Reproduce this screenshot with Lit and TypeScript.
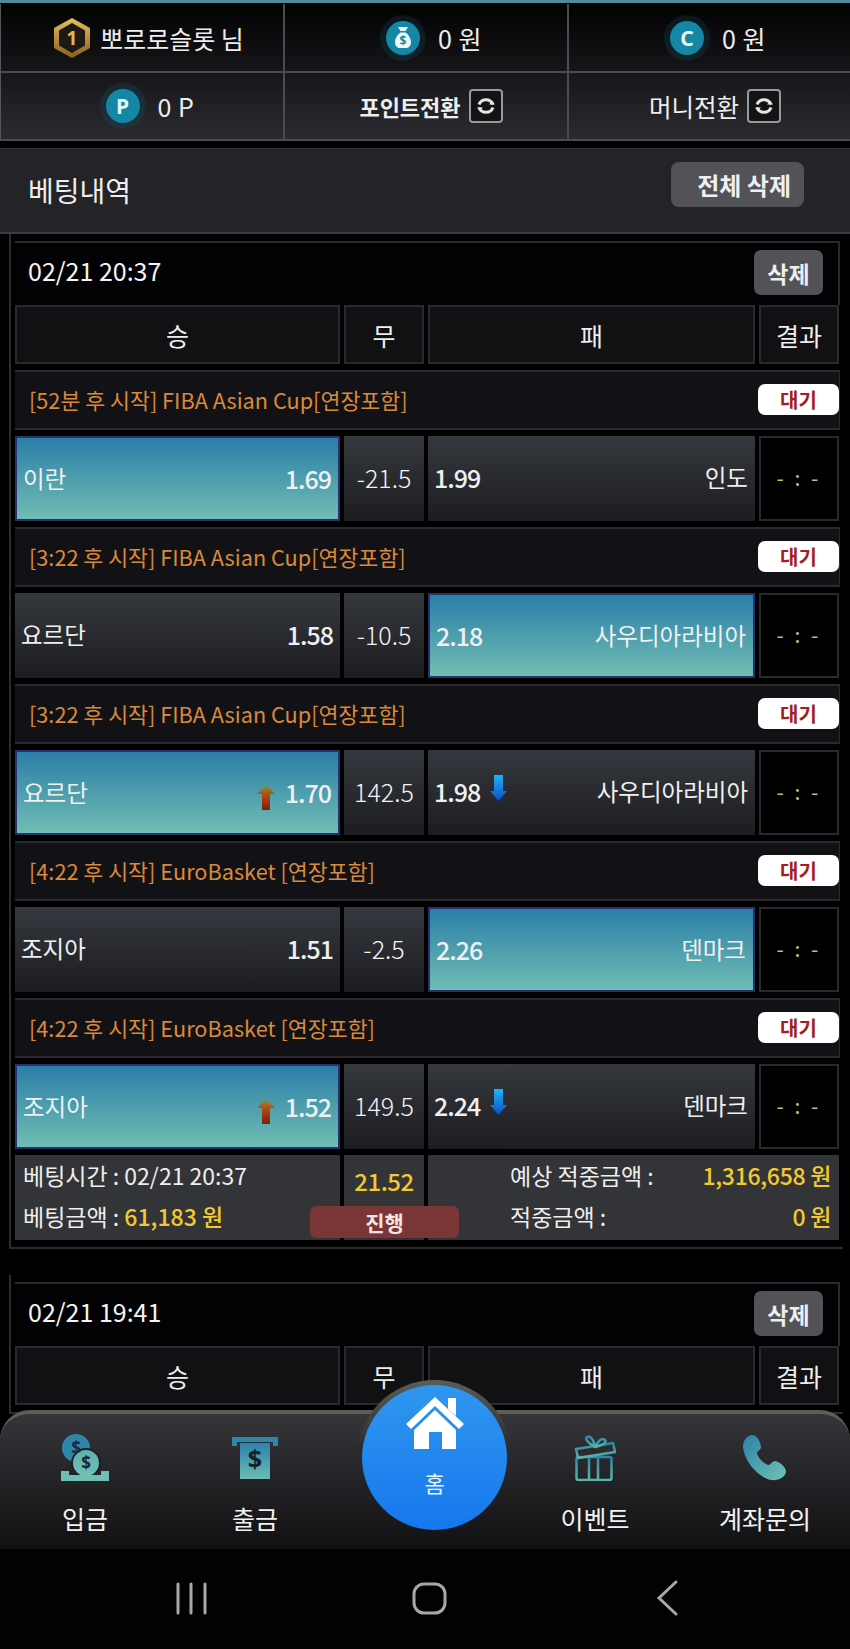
import { LitElement, html, css } from "lit";
import { customElement } from "lit/decorators.js";

type Side = { name: string; odds: string; sel?: boolean; arrow?: "up" | "down" };
type Bet = { league: string; left: Side; mid: string; right: Side };

const bets: Bet[] = [
  { league: "[52분 후 시작] FIBA Asian Cup[연장포함]", left: { name: "이란", odds: "1.69", sel: true }, mid: "-21.5", right: { name: "인도", odds: "1.99" } },
  { league: "[3:22 후 시작] FIBA Asian Cup[연장포함]", left: { name: "요르단", odds: "1.58" }, mid: "-10.5", right: { name: "사우디아라비아", odds: "2.18", sel: true } },
  { league: "[3:22 후 시작] FIBA Asian Cup[연장포함]", left: { name: "요르단", odds: "1.70", sel: true, arrow: "up" }, mid: "142.5", right: { name: "사우디아라비아", odds: "1.98", arrow: "down" } },
  { league: "[4:22 후 시작] EuroBasket [연장포함]", left: { name: "조지아", odds: "1.51" }, mid: "-2.5", right: { name: "덴마크", odds: "2.26", sel: true } },
  { league: "[4:22 후 시작] EuroBasket [연장포함]", left: { name: "조지아", odds: "1.52", sel: true, arrow: "up" }, mid: "149.5", right: { name: "덴마크", odds: "2.24", arrow: "down" } },
];

const upArrow = html`<svg class="arrow up" width="18" height="25" viewBox="0 0 18 25"><defs><linearGradient id="au" x1="0" y1="0" x2="0" y2="1"><stop offset="0" stop-color="#7d9a3a"/><stop offset=".4" stop-color="#b8480f"/><stop offset="1" stop-color="#7a1f0c"/></linearGradient></defs><path d="M9 0 18 9H13V25H5V9H0Z" fill="url(#au)"/></svg>`;
const downArrow = html`<svg class="arrow down" width="17" height="26" viewBox="0 0 17 26"><defs><linearGradient id="ad" x1="0" y1="0" x2="0" y2="1"><stop offset="0" stop-color="#22b4f5"/><stop offset="1" stop-color="#0a4fc4"/></linearGradient></defs><path d="M4 0H13V16H17L8.500 26 0 16H4Z" fill="url(#ad)"/></svg>`;
const refresh = html`<span class="refresh"><svg width="22" height="22" viewBox="0 0 22 22" fill="none" stroke="#e4e4e4" stroke-width="3"><path d="M4 9.500A7.500 7.500 0 0 1 18 9.500"/><path d="M18 12.500A7.500 7.500 0 0 1 4 12.500"/><path d="M14 9.500H20L17 6Z" fill="#e4e4e4" stroke="none"/><path d="M2 12.500H8L5 16Z" fill="#e4e4e4" stroke="none"/></svg></span>`;

@customElement("app-root")
export class AppRoot extends LitElement {
  static styles = css`
    :host { display: block; position: relative; width: 850px; height: 1649px; overflow: hidden; background: #000; color: #f0f0f0;
      font-family: "Noto Sans CJK KR", "Noto Sans", sans-serif; }
    * { box-sizing: border-box; }
    .topline { height: 3px; background: #4d8a9b; }
    .wallet { margin-top: 1px; display: grid; grid-template-columns: 284px 284px 282px; grid-template-rows: 69px 66px;
      background: linear-gradient(#020203, #2a2a30); border-left: 1px solid #55555a; border-bottom: 2px solid #4c4c50; }
    .wc { display: flex; align-items: center; justify-content: center; gap: 7px; font-size: 25px; font-weight: 400; color: #eee; border-right: 2px solid #4c4c50; white-space: nowrap; }
    .wc:nth-child(3n) { border-right: 0; }
    .wc:nth-child(-n+3) { border-bottom: 2px solid #4c4c50; }
    .wc b { font-size: 22px; font-weight: 700; }
    .wc .plain { font-size: 24.500px; }
    .wc.user { gap: 10px; padding-left: 14px; }
    .wc.amt { gap: 18px; padding-left: 16px; letter-spacing: .5px; }
    .wc.conv { padding-left: 10px; }
    .coin { position: relative; width: 34px; height: 34px; border-radius: 50%; background: #1487a6; box-shadow: 0 0 0 6px rgba(20,120,150,.16);
      display: flex; align-items: center; justify-content: center; color: #e8f6f8; font: 700 21px "Noto Sans", sans-serif; letter-spacing: 0; }
    .refresh { display: inline-flex; align-items: center; justify-content: center; width: 34px; height: 34px; border: 2px solid #9a9a9a; border-radius: 4px; background: #131316; margin-left: 1px; }
    .title { margin-top: 7px; height: 86px; display: flex; justify-content: space-between; align-items: flex-start; padding: 13px 46px 0 28px;
      background: #242428; border-top: 1px solid #323236; border-bottom: 2px solid #3c3c40; }
    .title h1 { margin: 5px 0 0; font-size: 28px; font-weight: 400; line-height: 46px; color: #eee; }
    .allbtn { width: 133px; height: 45px; border-radius: 8px; background: #525257; color: #f0f0f0; font-size: 24px; font-weight: 700;
      display: flex; align-items: center; justify-content: flex-end; padding-right: 13px; }
    .section { margin-left: 9px; width: 834px; border-left: 2px solid #2c2c30; border-bottom: 2px solid #2c2c30; padding: 7px 3px 7px 4px; }
    .section + .section { margin-top: 26px; }
    .head { height: 64px; display: flex; align-items: flex-start; justify-content: space-between; padding: 7px 15px 0 13px;
      border-top: 2px solid #2a2a2e; border-right: 2px solid #2a2a2e; background: #020204; }
    .date { font-size: 25px; line-height: 40px; color: #f4f4f4; }
    .del { width: 69px; height: 45px; border-radius: 7px; background: #525257; font-size: 23px; font-weight: 700; color: #eee; display: flex; align-items: center; justify-content: center; }
    .row { display: grid; grid-template-columns: 325px 80px 327px 80px; gap: 4px; }
    .hc { height: 59px; border: 2px solid #2a2a2e; background: #111114; display: flex; align-items: center; justify-content: center; font-size: 25px; color: #eee; }
    .league { margin-top: 6px; height: 60px; display: flex; align-items: center; justify-content: space-between; padding: 0 0 2px 14px;
      background: #121216; border-top: 2px solid #2a2a2e; border-bottom: 2px solid #2a2a2e; border-right: 1px solid #2a2a2e; color: #d98a3a; font-size: 21.700px; }
    .pill { width: 81px; height: 31px; border-radius: 7px; background: #fff; color: #a51d1f; font-size: 20px; font-weight: 700; display: flex; align-items: center; justify-content: center; }
    .bet { margin-top: 6px; }
    .cell { height: 85px; display: flex; align-items: center; justify-content: space-between; gap: 8px; padding: 0 7px 4px 6px; font-size: 23.500px;
      background: linear-gradient(#35383e, #1c1d21); color: #f0f0f0; white-space: nowrap; }
    .cell.sel { background: linear-gradient(#2b7ea8, #70bdb3); border: 2px solid #2c2f6e; padding: 0 7px 2px 6px; }
    .group { display: flex; align-items: center; gap: 10px; }
    .odds { font-weight: 500; letter-spacing: -1px; font-size: 25px; }
    .arrow.up { margin-top: 12px; }
    .arrow.down { margin-top: -6px; }
    .cell.mid { justify-content: center; padding: 0 0 4px; font-size: 25px; font-weight: 300; color: #f4f4f4; }
    .res { height: 85px; padding-bottom: 4px; border: 2px solid #2a2a2e; background: #000; color: #c4c07c; font-size: 21px; display: flex; align-items: center; justify-content: center; letter-spacing: 3px; }
    .sum { margin-top: 6px; }
    .sc { height: 85px; background: #333437; font-size: 23px; color: #eee; }
    .sl { padding: 0 8px; display: flex; flex-direction: column; }
    .sl div { height: 41px; display: flex; align-items: center; white-space: pre; }
    .sl div:first-child { margin-top: -1px; }
    .y { color: #f2c92e; font-weight: 500; }
    .sm { position: relative; display: flex; justify-content: center; padding-top: 6px; }
    .total { font-size: 24px; line-height: 40px; font-weight: 500; color: #f2c92e; letter-spacing: -.5px; }
    .badge { position: absolute; left: -34px; top: 51px; width: 149px; height: 32px; border-radius: 6px; background: #7a3536; color: #f0e4e4; font-size: 21px; font-weight: 700; display: flex; align-items: center; justify-content: center; }
    .sr { grid-column: 3 / 5; padding: 0 8px 0 82px; }
    .sr div { height: 41px; display: flex; align-items: center; justify-content: space-between; }
    .sr div:first-child { margin-top: -1px; }
    .sr .y { letter-spacing: -.3px; }
    .nav { position: absolute; left: 0; right: 0; top: 1410px; height: 139px; border-radius: 30px 30px 0 0; border-top: 4px solid #5c5c58;
      background: linear-gradient(#35353a, #111113); display: grid; grid-template-columns: repeat(5, 170px); }
    .ni { display: flex; flex-direction: column; align-items: center; padding-top: 20px; }
    .ni .ic { height: 48px; display: flex; align-items: center; justify-content: center; }
    .ni span { margin-top: 18px; font-size: 25px; line-height: 36px; color: #f2f2f2; white-space: nowrap; }
    .ring { position: absolute; left: 357px; top: 1380px; width: 155px; height: 155px; border-radius: 50%; background: linear-gradient(#5c5c58, #2a2a2c 45%, transparent 55%); padding: 5px; }
    .home { width: 145px; height: 145px; border-radius: 50%; background: linear-gradient(#2f97ee, #1677ee); display: flex; flex-direction: column; align-items: center; padding-top: 9px; color: #eaf4ff; }
    .home span { font-size: 22px; line-height: 30px; margin-top: 17px; }
    .sys { position: absolute; left: 0; right: 0; top: 1549px; height: 100px; background: #020204; }
    .sys svg { position: absolute; left: 0; top: 0; }
  `;

  side(s: Side, isLeft: boolean) {
    const cls = "cell" + (s.sel ? " sel" : "");
    if (isLeft) {
      return html`<div class=${cls}><span>${s.name}</span><span class="group">${s.arrow === "up" ? upArrow : ""}<span class="odds">${s.odds}</span></span></div>`;
    }
    return html`<div class=${cls}><span class="group"><span class="odds">${s.odds}</span>${s.arrow === "down" ? downArrow : ""}</span><span>${s.name}</span></div>`;
  }

  heads() {
    return html`<div class="row"><div class="hc">승</div><div class="hc">무</div><div class="hc">패</div><div class="hc">결과</div></div>`;
  }

  render() {
    return html`
      <div class="topline"></div>
      <div class="wallet">
        <div class="wc user">
          <svg width="36" height="40" viewBox="0 0 36 40"><defs><linearGradient id="hx" x1="0" y1="0" x2="0" y2="1"><stop offset="0" stop-color="#e6bf62"/><stop offset="1" stop-color="#8a5f1e"/></linearGradient></defs><path d="M18 0 36 10V30L18 40 0 30V10Z" fill="url(#hx)"/><path d="M18 5 31 12.500V27.500L18 35 5 27.500V12.500Z" fill="#1d1a16"/><text x="18" y="27" text-anchor="middle" font-size="19" font-family="Noto Sans" font-weight="700" fill="#e0b850">1</text></svg>
          <span>뽀로로슬롯 님</span>
        </div>
        <div class="wc amt">
          <span class="coin"><svg width="16" height="21" viewBox="0 0 16 21"><path d="M3 0H13L10.500 4H5.500ZM5.500 5.500H10.500C14 8 16 11.500 16 15 16 19 13.500 21 11 21H5C2.500 21 0 19 0 15 0 11.500 2 8 5.500 5.500Z" fill="#eef8fa"/><text x="8" y="18" text-anchor="middle" font-size="12" font-weight="700" font-family="Noto Sans" fill="#1487a6">$</text></svg></span>
          <span>0 원</span>
        </div>
        <div class="wc amt"><span class="coin">C</span><span>0 원</span></div>
        <div class="wc amt"><span class="coin">P</span><span>0 P</span></div>
        <div class="wc conv"><b>포인트전환</b>${refresh}</div>
        <div class="wc conv"><span class="plain">머니전환</span>${refresh}</div>
      </div>
      <div class="title"><h1>베팅내역</h1><div class="allbtn">전체 삭제</div></div>

      <div class="section">
        <div class="head"><span class="date">02/21 20:37</span><span class="del">삭제</span></div>
        ${this.heads()}
        ${bets.map(b => html`
          <div class="league"><span>${b.league}</span><span class="pill">대기</span></div>
          <div class="row bet">${this.side(b.left, true)}<div class="cell mid">${b.mid}</div>${this.side(b.right, false)}<div class="res">- : -</div></div>
        `)}
        <div class="row sum">
          <div class="sc sl"><div>베팅시간 : 02/21 20:37</div><div>베팅금액 : <span class="y">61,183 원</span></div></div>
          <div class="sc sm"><span class="total">21.52</span><span class="badge">진행</span></div>
          <div class="sc sr"><div><span>예상 적중금액 :</span><span class="y">1,316,658 원</span></div><div><span>적중금액 :</span><span class="y">0 원</span></div></div>
        </div>
      </div>
      <div class="section">
        <div class="head"><span class="date">02/21 19:41</span><span class="del">삭제</span></div>
        ${this.heads()}
      </div>

      <div class="nav">
        <div class="ni"><div class="ic"><svg width="48" height="48" viewBox="0 0 48 48"><defs><linearGradient id="t1" x1="0" y1="0" x2="0" y2="1"><stop offset="0" stop-color="#5eb0b0"/><stop offset="1" stop-color="#70c2b4"/></linearGradient></defs><circle cx="15" cy="14" r="14" fill="#2f86ab"/><circle cx="25" cy="29" r="14" fill="url(#t1)" stroke="#1f2024" stroke-width="2"/><path d="M0 37H8V41H40V37H48V47H0Z" fill="#6fc0b4"/><text x="15" y="20" text-anchor="middle" font-size="17" font-weight="700" font-family="Noto Sans" fill="#1b2a34">$</text><text x="25" y="35" text-anchor="middle" font-size="17" font-weight="700" font-family="Noto Sans" fill="#1b2a34">$</text></svg></div><span>입금</span></div>
        <div class="ni"><div class="ic"><svg width="46" height="42" viewBox="0 0 46 42"><defs><linearGradient id="t2" x1="0" y1="0" x2="0" y2="1"><stop offset="0" stop-color="#2b82a8"/><stop offset="1" stop-color="#6cbcb2"/></linearGradient></defs><path d="M0 0H46V9H41V5H5V9H0Z" fill="#2f86ab"/><rect x="8" y="6" width="30" height="36" fill="url(#t2)"/><text x="23" y="31" text-anchor="middle" font-size="25" font-weight="700" font-family="Noto Sans" fill="#15212a">$</text></svg></div><span>출금</span></div>
        <div class="ni"></div>
        <div class="ni"><div class="ic"><svg width="42" height="46" viewBox="0 0 42 46" fill="none" stroke-width="2.500" stroke-linejoin="round"><defs><linearGradient id="t4" x1="0" y1="0" x2="0" y2="1"><stop offset="0" stop-color="#2f86ab"/><stop offset="1" stop-color="#5ab6aa"/></linearGradient></defs><g stroke="url(#t4)"><rect x="2.500" y="22" width="35" height="23" rx="2"/><path d="M15 22V45M24 22V45"/><path d="M2 14 39 8 41 17 4 23Z"/><path d="M21 12C15 8 10 4 13 2 17 0 20 6 21 12ZM21 12C24 6 28 2 31 5 33 8 27 11 21 12Z"/></g></svg></div><span>이벤트</span></div>
        <div class="ni"><div class="ic"><svg width="44" height="46" viewBox="0 0 44 46"><defs><linearGradient id="t3" x1="0" y1="0" x2="1" y2="1"><stop offset="0" stop-color="#2b82a8"/><stop offset="1" stop-color="#70c2b4"/></linearGradient></defs><path d="M9 0C14 0 17 6 18 12 18 15 14 16 14 18 15 23 20 28 25 30 28 30 29 26 32 26 37 27 43 32 43 37 42 42 36 46 28 45 14 42 1 25 0 12 0 6 3 1 9 0Z" fill="url(#t3)"/></svg></div><span>계좌문의</span></div>
      </div>

      <div class="ring"><div class="home">
        <svg width="62" height="56" viewBox="0 0 62 56"><path d="M31 3 60 30 55 35 31 12 7 35 2 30Z" fill="#fff"/><path d="M44 4H52V22L44 15Z" fill="#fff"/><path d="M31 16 52 36V55H38V38H25V55H10V36Z" fill="#fff"/></svg>
        <span>홈</span>
      </div></div>

      <div class="sys"><svg width="850" height="100" viewBox="0 0 850 100" fill="none" stroke="#a8a8a8" stroke-width="3" stroke-linecap="round"><path d="M178 35V64M191 35V64M205 35V64"/><rect x="414" y="35" width="31" height="29" rx="10"/><path d="M676 33 659 49 676 65"/></svg></div>
    `;
  }
}
